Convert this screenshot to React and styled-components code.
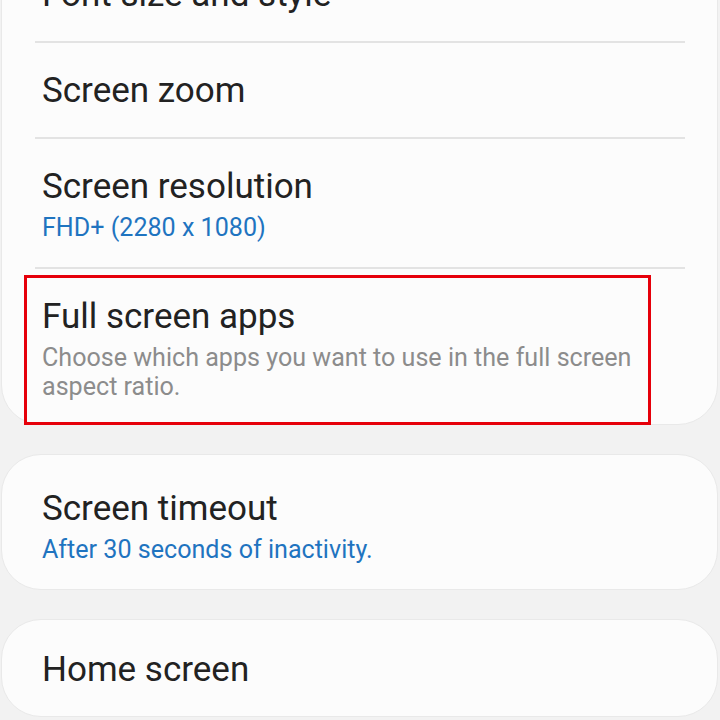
import styled, { createGlobalStyle } from "styled-components";

const GlobalStyle = createGlobalStyle`
  html, body {
    margin: 0;
    padding: 0;
    background: #f2f2f2;
    overflow: hidden;
  }
  body {
    font-family: Roboto, "Noto Sans", sans-serif;
    -webkit-font-smoothing: antialiased;
  }
`;

const Page = styled.div`
  width: 720px;
  height: 720px;
  overflow: hidden;
  box-sizing: border-box;
  padding: 0 2px 0 1px;
`;

const List = styled.div`
  margin-top: -58px;
  display: flex;
  flex-direction: column;
  gap: 29px;
`;

const Card = styled.div`
  background: #fcfcfc;
  border: 1px solid #e9e9e9;
  border-radius: 40px;
  padding: ${(p) => p.$top || 4}px 0 0;
  display: flex;
  flex-direction: column;
`;

const Row = styled.div`
  position: relative;
  margin: 0 32px 0 33px;
  padding: 27px 7px ${(p) => (p.$last ? 23 : 25)}px;
  border-top: ${(p) => (p.$first ? "none" : "2px solid #e3e3e3")};
  display: flex;
  flex-direction: column;
  gap: 5px;
`;

const Highlight = styled.div`
  position: absolute;
  left: -11px;
  right: 34px;
  top: 6px;
  bottom: -1px;
  border: 3px solid #e6000a;
  pointer-events: none;
`;

const Title = styled.div`
  font-size: 35px;
  line-height: 42px;
  color: #222222;
`;

const Sub = styled.div`
  font-size: 25.1px;
  line-height: 29px;
  color: ${(p) => (p.$accent ? "#1f74c0" : "#8c8c8c")};
`;

const Item = ({ title, sub, accent, first, last, highlighted }) => (
  <Row $first={first} $last={last}>
    <Title>{title}</Title>
    {sub && <Sub $accent={accent}>{sub}</Sub>}
    {highlighted && <Highlight />}
  </Row>
);

export default function App() {
  return (
    <Page>
      <GlobalStyle />
      <List>
        <Card>
          <Item first title="Font size and style" />
          <Item title="Screen zoom" />
          <Item title="Screen resolution" sub="FHD+ (2280 x 1080)" accent />
          <Item
            highlighted
            last
            title="Full screen apps"
            sub="Choose which apps you want to use in the full screen aspect ratio."
          />
        </Card>
        <Card $top={6}>
          <Item
            first
            title="Screen timeout"
            sub="After 30 seconds of inactivity."
            accent
          />
        </Card>
        <Card $top={2}>
          <Item first title="Home screen" />
        </Card>
      </List>
    </Page>
  );
}
